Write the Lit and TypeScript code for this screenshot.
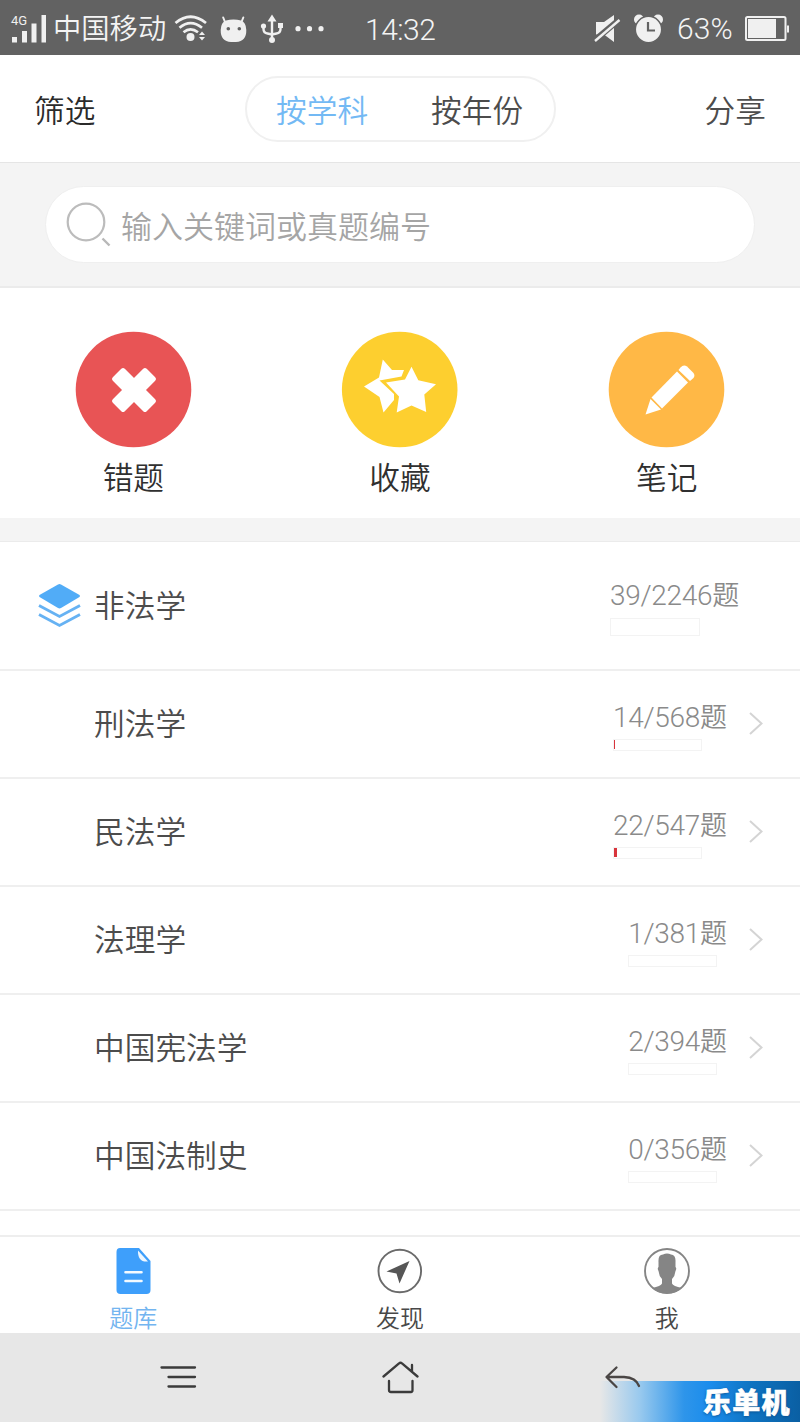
import { LitElement, html, css, svg } from "lit";
import { customElement, property } from "lit/decorators.js";

interface Subject {
  name: string;
  done: number;
  total: number;
  mark: number;
}

const SUBJECTS: Subject[] = [
  { name: "刑法学", done: 14, total: 568, mark: 1 },
  { name: "民法学", done: 22, total: 547, mark: 3 },
  { name: "法理学", done: 1, total: 381, mark: 0 },
  { name: "中国宪法学", done: 2, total: 394, mark: 0 },
  { name: "中国法制史", done: 0, total: 356, mark: 0 },
];

const icon = (x: number, y: number, w: number, h: number, body: unknown) =>
  html`<svg width=${w} height=${h} viewBox="${x} ${y} ${w} ${h}" fill="none">${body}</svg>`;

const base = css`
  :host,
  * {
    box-sizing: border-box;
  }
  svg {
    display: block;
    flex: none;
  }
  .num {
    font-family: Roboto, "Noto Sans CJK SC", sans-serif;
  }
`;

@customElement("status-bar")
export class StatusBar extends LitElement {
  static styles = [
    base,
    css`
      :host {
        display: block;
        height: 55px;
        background: #626262;
        color: #f4f4f4;
      }
      .bar {
        display: grid;
        height: 55px;
        align-items: center;
        grid-template-columns: 43px 121px 45px 40px 34px 72px 228px 40px 44px 67px 56px;
        padding-left: 10px;
      }
      .carrier {
        font-size: 28.3px;
        line-height: 52px;
        height: 55px;
        white-space: nowrap;
      }
      .time {
        font-size: 30px;
        line-height: 55px;
        padding-top: 2px;
        letter-spacing: -0.5px;
      }
      .pct {
        font-size: 30px;
        line-height: 55px;
        letter-spacing: 0.1px;
      }
    `,
  ];
  render() {
    return html`<div class="bar">
      ${icon(10, 0, 40, 55, svg`<text x="11" y="24" font-size="13" font-family="Roboto" font-weight="400" fill="#f0f0f0">4G</text>
        <path fill="#f0f0f0" d="M12 36h5v5.500h-5zM22 30h5v11.500h-5zM31.500 22.500h5v19h-5zM41.500 14h4.500v27.500h-4.500z"/>`)}
      <span class="carrier">中国移动</span>
      ${icon(174, 0, 34, 55, svg`<g stroke="#f0f0f0" stroke-width="2.700"><path d="M175.500 22Q190.500 9.500 206 22M179.500 26.800Q190.500 17.500 202 26.800M183.500 31.200Q190.500 25.500 198 31.200"/></g>
        <circle cx="190.500" cy="36" r="4" fill="#f0f0f0"/><path fill="#f0f0f0" d="M199 34l3-3.500 3 3.500zM199 36h6l-3 3.500z"/>`)}
      ${icon(219, 0, 30, 55, svg`<path d="M225 21l-1.800-4.500M241.500 21l1.800-4.500" stroke="#f0f0f0" stroke-width="2" stroke-linecap="round"/><path fill="#f0f0f0" fill-rule="evenodd" d="M226 19.500Q233.500 17.500 241 19.500Q246 21 246.300 29Q246.500 40.500 236 41H231Q220.500 40.500 220.700 29Q221 21 226 19.500zM226.500 27.700a1.800 1.800 0 1 0 3.600 0a1.800 1.800 0 1 0-3.600 0zM237.500 27.700a1.800 1.800 0 1 0 3.600 0a1.800 1.800 0 1 0-3.600 0z"/>`)}
      ${icon(259, 0, 26, 55, svg`<g stroke="#f0f0f0" stroke-width="2.400"><path d="M272 18v21M263.500 25v3q0 4 4 4.500l4.500 1l4.500-1q4-.500 4-4.500v-3"/></g><path fill="#f0f0f0" d="M267.500 20.500L272 13.500l4.500 7zM278 22h5v5h-5z"/><circle cx="263.500" cy="25" r="2.600" fill="#f0f0f0"/><circle cx="272" cy="39" r="3" fill="#f0f0f0"/>`)}
      ${icon(293, 0, 34, 55, svg`<g fill="#f0f0f0"><circle cx="298" cy="27.700" r="2.600"/><circle cx="309.500" cy="27.700" r="2.600"/><circle cx="321" cy="27.700" r="2.600"/></g>`)}
      <span class="time num">14:32</span>
      ${icon(593, 0, 28, 55, svg`<path fill="#f0f0f0" d="M596 21h8l10-7v27l-10-7.500h-8z"/><path d="M594.500 39.500L620 18" stroke="#626262" stroke-width="6"/><path d="M595 40L619.500 19" stroke="#f0f0f0" stroke-width="2.400"/>`)}
      ${icon(633, 0, 31, 55, svg`<g fill="#f0f0f0"><circle cx="639" cy="18.500" r="5"/><circle cx="658" cy="18.500" r="5"/></g><circle cx="648.500" cy="28.500" r="13.200" fill="#f0f0f0" stroke="#626262" stroke-width="1.500"/><path d="M648 21v8.500h7" stroke="#626262" stroke-width="2.200"/>`)}
      <span class="pct num">63%</span>
      ${icon(744, 0, 46, 55, svg`<rect x="746" y="16" width="39.500" height="23" rx="1.500" stroke="#f0f0f0" stroke-width="2"/><path d="M748 18h28v19h-28z" fill="#f0f0f0"/><path d="M787 24.500h2v7h-2z" fill="#f0f0f0"/>`)}
    </div>`;
  }
}

@customElement("top-header")
export class TopHeader extends LitElement {
  static styles = [
    base,
    css`
      :host {
        display: block;
      }
      .head {
        display: grid;
        grid-template-columns: 211px 311px 1fr;
        align-items: center;
        height: 108px;
        padding: 0 34px;
        border-bottom: 1px solid #e5e5e5;
        font-size: 30.7px;
        color: #4c4c4c;
      }
      .filter {
        color: #2b2b2b;
      }
      .share {
        text-align: right;
      }
      .tabs {
        display: grid;
        grid-template-columns: 155px 1fr;
        height: 66px;
        padding-left: 29px;
        line-height: 61px;
        border: 2px solid #f0f0f0;
        border-radius: 33px;
      }
      .on {
        color: #73b9f4;
      }
      .band {
        height: 125px;
        padding: 23px 45px 0;
        background: #f4f4f4;
        border-bottom: 2px solid #ebebeb;
      }
      .search {
        display: flex;
        align-items: center;
        gap: 10px;
        height: 77px;
        padding-left: 18px;
        border: 1px solid #efefef;
        border-radius: 39px;
        background: #fff;
        color: #a5a5a5;
        font-size: 31px;
      }
      .search svg {
        margin-left: 1px;
      }
    `,
  ];
  render() {
    return html`<div class="head">
        <span class="filter">筛选</span>
        <div class="tabs"><span class="on">按学科</span><span>按年份</span></div>
        <span class="share">分享</span>
      </div>
      <div class="band">
        <div class="search">
          ${icon(65, 200, 46, 50, svg`<circle cx="86" cy="222" r="18.300" stroke="#bcbcbc" stroke-width="2.200"/><path d="M102.500 238.500l7 7" stroke="#b8b8b8" stroke-width="2.400"/>`)}
          <span>输入关键词或真题编号</span>
        </div>
      </div>`;
  }
}

@customElement("quick-actions")
export class QuickActions extends LitElement {
  static styles = [
    base,
    css`
      :host {
        display: block;
        border-bottom: 23px solid #f4f4f4;
      }
      .grid {
        display: grid;
        grid-template-columns: repeat(3, 1fr);
        height: 230px;
        padding-top: 43px;
        font-size: 30.7px;
        color: #303030;
      }
      .cell {
        display: flex;
        flex-direction: column;
        align-items: center;
        line-height: 55px;
      }
    `,
  ];
  render() {
    return html`<div class="grid">
      <div class="cell">
        ${icon(75, 331, 117, 117, svg`<circle cx="133.500" cy="389.500" r="57.800" fill="#e85455"/><g fill="#fff" transform="rotate(45 134 390)"><rect x="110" y="381.500" width="48" height="17" rx="2.500"/><rect x="125.500" y="366" width="17" height="48" rx="2.500"/></g>`)}
        <span>错题</span>
      </div>
      <div class="cell">
        ${icon(341.5, 331, 117, 117, svg`<circle cx="400.200" cy="389.500" r="57.800" fill="#fdcf2f"/><g fill="#fff"><path d="M383.300 359.500L392.500 370L404.500 370L402 376.500L380 380.500L394.500 394L394.500 400L384 412.500L380 397L364.500 386.500L379.500 377.500z"/><path d="M412 366.800L418.800 380.300L436.500 384.300L424.800 394.500L426.700 412L412 405.500L397.200 412.500L399.500 396.500L386.500 382.500L405.500 379.500z"/></g>`)}
        <span>收藏</span>
      </div>
      <div class="cell">
        ${icon(608, 331, 117, 117, svg`<circle cx="666.500" cy="389.500" r="57.800" fill="#ffb846"/><g fill="#fff"><path d="M680.500 367.500Q683.500 364 687 366.500L693 372.500Q695.500 375 693.500 378L690 381L678.500 370z"/><path d="M677 371.500L688 382.500L662 408.500L651.500 397.500z"/><path d="M650.500 399L661 409.500L645.500 414.500z"/></g>`)}
        <span>笔记</span>
      </div>
    </div>`;
  }
}

@customElement("subject-row")
export class SubjectRow extends LitElement {
  @property({ attribute: false }) subject!: Subject;
  static styles = [
    base,
    css`
      :host {
        display: block;
      }
      .row {
        display: grid;
        grid-template-columns: 1fr auto 21px;
        height: 108px;
        padding: 0 35px 0 94px;
        border-bottom: 2px solid #efefef;
      }
      .name {
        font-size: 30.7px;
        line-height: 102px;
        color: #4c4c4c;
      }
      .stat {
        display: flex;
        flex-direction: column;
        margin-right: 17px;
        padding-top: 28px;
      }
      .count {
        display: block;
        height: 40px;
        line-height: 34px;
        font-size: 27px;
        color: #8a8a8a;
        white-space: nowrap;
      }
      .num {
        font-size: 28px;
        letter-spacing: -0.3px;
      }
      .track {
        width: 89px;
        height: 12px;
        border: 1px solid #f3f3f3;
      }
      .fill {
        height: 9px;
        background: #d8343c;
      }
      .chev {
        justify-self: end;
        padding-top: 40px;
      }
    `,
  ];
  render() {
    const s = this.subject;
    return html`<div class="row">
      <span class="name">${s.name}</span>
      <div class="stat">
        <span class="count"><span class="num">${s.done}/${s.total}</span>题</span>
        <div class="track"><div class="fill" style="width:${s.mark}px"></div></div>
      </div>
      <div class="chev">${icon(748, 711, 17, 24, svg`<path d="M750 713L761.500 723.500L750 734" stroke="#d4d4d4" stroke-width="2"/>`)}</div>
    </div>`;
  }
}

@customElement("subject-list")
export class SubjectList extends LitElement {
  static styles = [
    base,
    css`
      :host {
        display: block;
        height: 694px;
        border-top: 1px solid #ebebeb;
        overflow: hidden;
      }
      .group {
        display: grid;
        grid-template-columns: 56px 1fr 130px;
        height: 129px;
        padding: 0 60px 0 38px;
        border-bottom: 2px solid #efefef;
      }
      .icon {
        padding-top: 41px;
      }
      .name {
        font-size: 30.7px;
        line-height: 123px;
        color: #4c4c4c;
      }
      .stat {
        padding-top: 35px;
      }
      .count {
        display: block;
        height: 41px;
        line-height: 34px;
        font-size: 27px;
        color: #8a8a8a;
        white-space: nowrap;
      }
      .num {
        font-size: 28px;
        letter-spacing: -0.3px;
      }
      .track {
        width: 90px;
        height: 18px;
        border: 1px solid #f3f3f3;
      }
    `,
  ];
  render() {
    return html`<div class="group">
        <div class="icon">${icon(38, 583, 43, 45, svg`<path fill="#51acf7" d="M58 584.500q1.500-.800 3 0L79.500 595q1 1 0 2L61 608q-1.500.800-3 0L39.500 597q-1-1 0-2z"/><path d="M39 605.500l20.500 11L80 605.500M39 614.500l20.500 11L80 614.500" stroke="#66b2f3" stroke-width="2.800"/>`)}</div>
        <span class="name">非法学</span>
        <div class="stat">
          <span class="count"><span class="num">39/2246</span>题</span>
          <div class="track"></div>
        </div>
      </div>
      ${SUBJECTS.map((s) => html`<subject-row .subject=${s}></subject-row>`)}`;
  }
}

@customElement("tab-bar")
export class TabBar extends LitElement {
  static styles = [
    base,
    css`
      :host {
        display: block;
      }
      .tabs {
        display: grid;
        grid-template-columns: repeat(3, 1fr);
        height: 98px;
        padding-top: 10px;
        border-top: 2px solid #eee;
        font-size: 24px;
        line-height: 44px;
        color: #484848;
      }
      .tab {
        display: flex;
        flex-direction: column;
        align-items: center;
      }
      .on {
        color: #73b5f0;
      }
    `,
  ];
  render() {
    return html`<div class="tabs">
      <div class="tab on">
        ${icon(115.5, 1247, 36, 48, svg`<path fill="#3e9ffb" d="M120.500 1248H139.500L151 1261V1290Q151 1294 147 1294H121Q117 1294 117 1290V1252Q117 1248 120.500 1248z"/><path fill="#eef7ff" d="M138.500 1250.500L148.500 1261.500Q138 1262.500 138.500 1250.500z"/><path d="M126 1272.200H142M126 1281H142" stroke="#f3faff" stroke-width="2.600" stroke-linecap="round"/>`)}
        <span>题库</span>
      </div>
      <div class="tab">
        ${icon(376, 1247, 48, 48, svg`<circle cx="399.800" cy="1271" r="21.300" stroke="#6a6a6a" stroke-width="1.900"/><path fill="#565656" d="M409.500 1261L386.500 1271.500L396.500 1273.500L399.500 1283.500z"/>`)}
        <span>发现</span>
      </div>
      <div class="tab">
        ${icon(643, 1247, 48, 48, svg`<circle cx="667" cy="1271" r="22" stroke="#858585" stroke-width="1.900"/><path fill="#858585" d="M658.500 1262Q658 1254.500 663 1254.500Q667 1252.500 671 1254.500Q676 1255 675.500 1262V1267Q677 1268 675.500 1271Q675 1276 672 1279V1283.500Q673 1286 682 1288Q676 1293.500 667 1293.500Q658 1293.500 652 1288Q661 1286 662 1283.500V1279Q659 1276 658.500 1271Q657 1268 658.500 1267z"/>`)}
        <span>我</span>
      </div>
    </div>`;
  }
}

@customElement("nav-bar")
export class NavBar extends LitElement {
  static styles = [
    base,
    css`
      :host {
        display: block;
        position: relative;
        background: #e7e7e7;
      }
      .nav {
        display: grid;
        grid-template-columns: 222px 222px 1fr;
        align-items: center;
        height: 89px;
        padding-left: 160px;
      }
      .mark {
        position: absolute;
        right: 0;
        bottom: 0;
        width: 200px;
        height: 41px;
        padding-left: 103px;
        background: linear-gradient(90deg, rgba(90, 175, 245, 0) 0, rgba(110, 185, 242, 0.65) 20%, #2e95ea 42%, #1a8cec 55%, #0f74c2 75%, #0a5fa3 100%);
        color: #fff;
        font-size: 28px;
        font-weight: 900;
        line-height: 41px;
        letter-spacing: 1.3px;
        white-space: nowrap;
        -webkit-text-stroke: 0.6px #fff;
        text-shadow: 0 1px 3px #084d8c;
      }
      .nav svg {
        position: relative;
        z-index: 1;
      }
    `,
  ];
  render() {
    return html`<div class="nav">
        ${icon(160, 1333, 40, 89, svg`<path d="M161.500 1367.500H195M168.500 1377H195M168.500 1386.500H195" stroke="#3b3b3b" stroke-width="2.300" stroke-linecap="round"/>`)}
        ${icon(382, 1333, 38, 89, svg`<path d="M383.500 1376.500L399 1363.500Q400.500 1362 402 1363.500L417.500 1376.500M412 1365V1371M389 1381V1390Q389 1392 391 1392H411Q412.500 1392 412.500 1390V1381" stroke="#3b3b3b" stroke-width="2.300" stroke-linecap="round"/>`)}
        ${icon(604, 1333, 38, 89, svg`<path d="M616.500 1367.500L606.500 1377L616.500 1387M607 1377H624Q636 1377.500 639 1386" stroke="#4a4645" stroke-width="2.300" stroke-linecap="round" stroke-linejoin="round"/>`)}
      </div>
      <div class="mark">乐单机</div>`;
  }
}

@customElement("app-root")
export class AppRoot extends LitElement {
  static styles = css`
    :host {
      display: flex;
      flex-direction: column;
      width: 800px;
      height: 1422px;
      overflow: hidden;
      background: #fff;
      font-family: "Noto Sans CJK SC", sans-serif;
      font-weight: 350;
    }
  `;
  render() {
    return html`<status-bar></status-bar>
      <top-header></top-header>
      <quick-actions></quick-actions>
      <subject-list></subject-list>
      <tab-bar></tab-bar>
      <nav-bar></nav-bar>`;
  }
}
